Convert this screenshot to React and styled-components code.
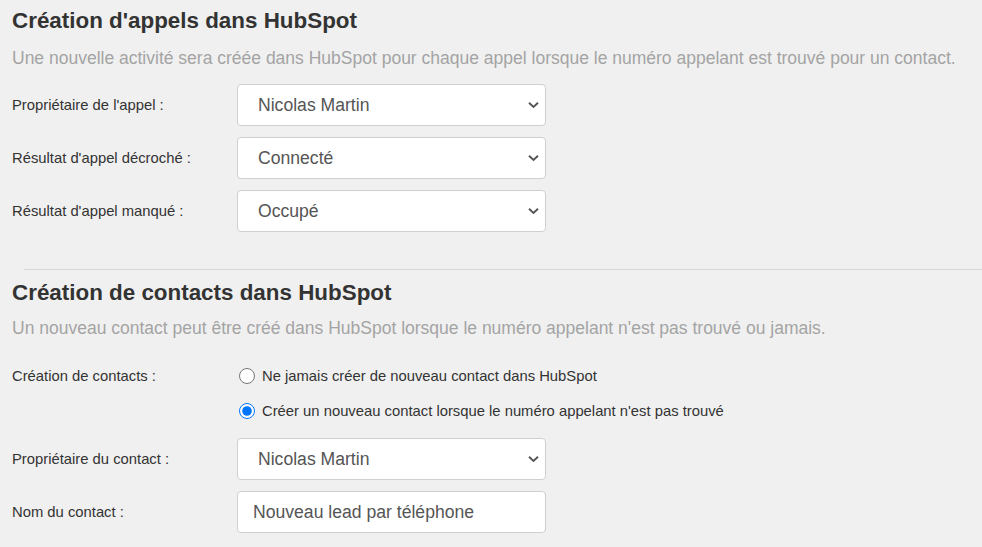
import React from 'react';
import styled, { createGlobalStyle } from 'styled-components';

const GlobalStyle = createGlobalStyle`
  html, body { margin: 0; padding: 0; background: #f0f0f0; }
  body { font-family: "Liberation Sans", Arial, sans-serif; color: #333; }
  * { box-sizing: border-box; }
`;

const Page = styled.div`
  padding: 8px 0 0 12px;
  height: 547px;
  overflow: hidden;
`;

const Section = styled.section`
  display: flex;
  flex-direction: column;
  margin-top: ${(p) => p.$top || 0}px;
`;

const Heading = styled.h2`
  margin: 0;
  font-size: 22.4px;
  line-height: 26px;
  font-weight: 700;
  color: #333;
`;

const Description = styled.p`
  margin: ${(p) => p.$gap}px 0 0;
  font-size: 17.5px;
  line-height: 20px;
  color: #a4a4a4;
  white-space: nowrap;
`;

const Form = styled.div`
  display: flex;
  flex-direction: column;
  gap: 11px;
  margin-top: ${(p) => p.$top}px;
`;

const Field = styled.div`
  display: grid;
  grid-template-columns: 225px 309px;
  align-items: ${(p) => (p.$top ? 'start' : 'center')};
`;

const Label = styled.label`
  font-size: 14.8px;
  line-height: 20px;
  color: #333;
`;

const SelectWrap = styled.div`
  position: relative;
  height: 42px;
`;

const Select = styled.select`
  appearance: none;
  -webkit-appearance: none;
  width: 100%;
  height: 100%;
  margin: 0;
  border: 1px solid #cfcfcf;
  border-radius: 4px;
  background: #fff;
  padding: 0 40px 0 20px;
  font-family: inherit;
  font-size: 17.6px;
  color: #555;
  outline: none;
`;

const Chevron = styled.svg`
  position: absolute;
  right: 7px;
  top: 50%;
  width: 11px;
  height: 7px;
  transform: translateY(-50%);
  pointer-events: none;
`;

const TextInput = styled.input`
  width: 100%;
  height: 42px;
  margin: 0;
  border: 1px solid #cfcfcf;
  border-radius: 4px;
  background: #fff;
  padding: 0 15px;
  font-family: inherit;
  font-size: 17.6px;
  color: #555;
  outline: none;
`;

const Divider = styled.hr`
  margin: 37px 0 0 12px;
  border: 0;
  height: 1px;
  background: #d7d7d7;
`;

const RadioGroup = styled.div`
  display: flex;
  flex-direction: column;
  gap: 15px;
  padding-bottom: 6px;
  width: 600px;
`;

const Option = styled.label`
  display: flex;
  align-items: center;
  gap: 7px;
  font-size: 14.8px;
  line-height: 20px;
  color: #333;
  white-space: nowrap;
`;

const Radio = styled.input`
  width: 16px;
  height: 16px;
  margin: 0 0 0 2px;
  accent-color: #0075ff;
`;

function Dropdown({ value }) {
  return (
    <SelectWrap>
      <Select defaultValue={value}>
        <option>{value}</option>
      </Select>
      <Chevron viewBox="0 0 11 7">
        <path d="M1 1.2 L5.5 5.5 L10 1.2" fill="none" stroke="#555" strokeWidth="1.9" />
      </Chevron>
    </SelectWrap>
  );
}

export default function App() {
  return (
    <>
      <GlobalStyle />
      <Page>
        <Section>
          <Heading>Création d'appels dans HubSpot</Heading>
          <Description $gap={14}>
            Une nouvelle activité sera créée dans HubSpot pour chaque appel lorsque le numéro appelant est trouvé pour un contact.
          </Description>
          <Form $top={16}>
            <Field>
              <Label>Propriétaire de l'appel :</Label>
              <Dropdown value="Nicolas Martin" />
            </Field>
            <Field>
              <Label>Résultat d'appel décroché :</Label>
              <Dropdown value="Connecté" />
            </Field>
            <Field>
              <Label>Résultat d'appel manqué :</Label>
              <Dropdown value="Occupé" />
            </Field>
          </Form>
        </Section>
        <Divider />
        <Section $top={10}>
          <Heading>Création de contacts dans HubSpot</Heading>
          <Description $gap={12}>
            Un nouveau contact peut être créé dans HubSpot lorsque le numéro appelant n'est pas trouvé ou jamais.
          </Description>
          <Form $top={28}>
            <Field $top>
              <Label>Création de contacts :</Label>
              <RadioGroup>
                <Option>
                  <Radio type="radio" name="create" />
                  Ne jamais créer de nouveau contact dans HubSpot
                </Option>
                <Option>
                  <Radio type="radio" name="create" defaultChecked />
                  Créer un nouveau contact lorsque le numéro appelant n'est pas trouvé
                </Option>
              </RadioGroup>
            </Field>
            <Field>
              <Label>Propriétaire du contact :</Label>
              <Dropdown value="Nicolas Martin" />
            </Field>
            <Field>
              <Label>Nom du contact :</Label>
              <TextInput defaultValue="Nouveau lead par téléphone" />
            </Field>
          </Form>
        </Section>
      </Page>
    </>
  );
}
